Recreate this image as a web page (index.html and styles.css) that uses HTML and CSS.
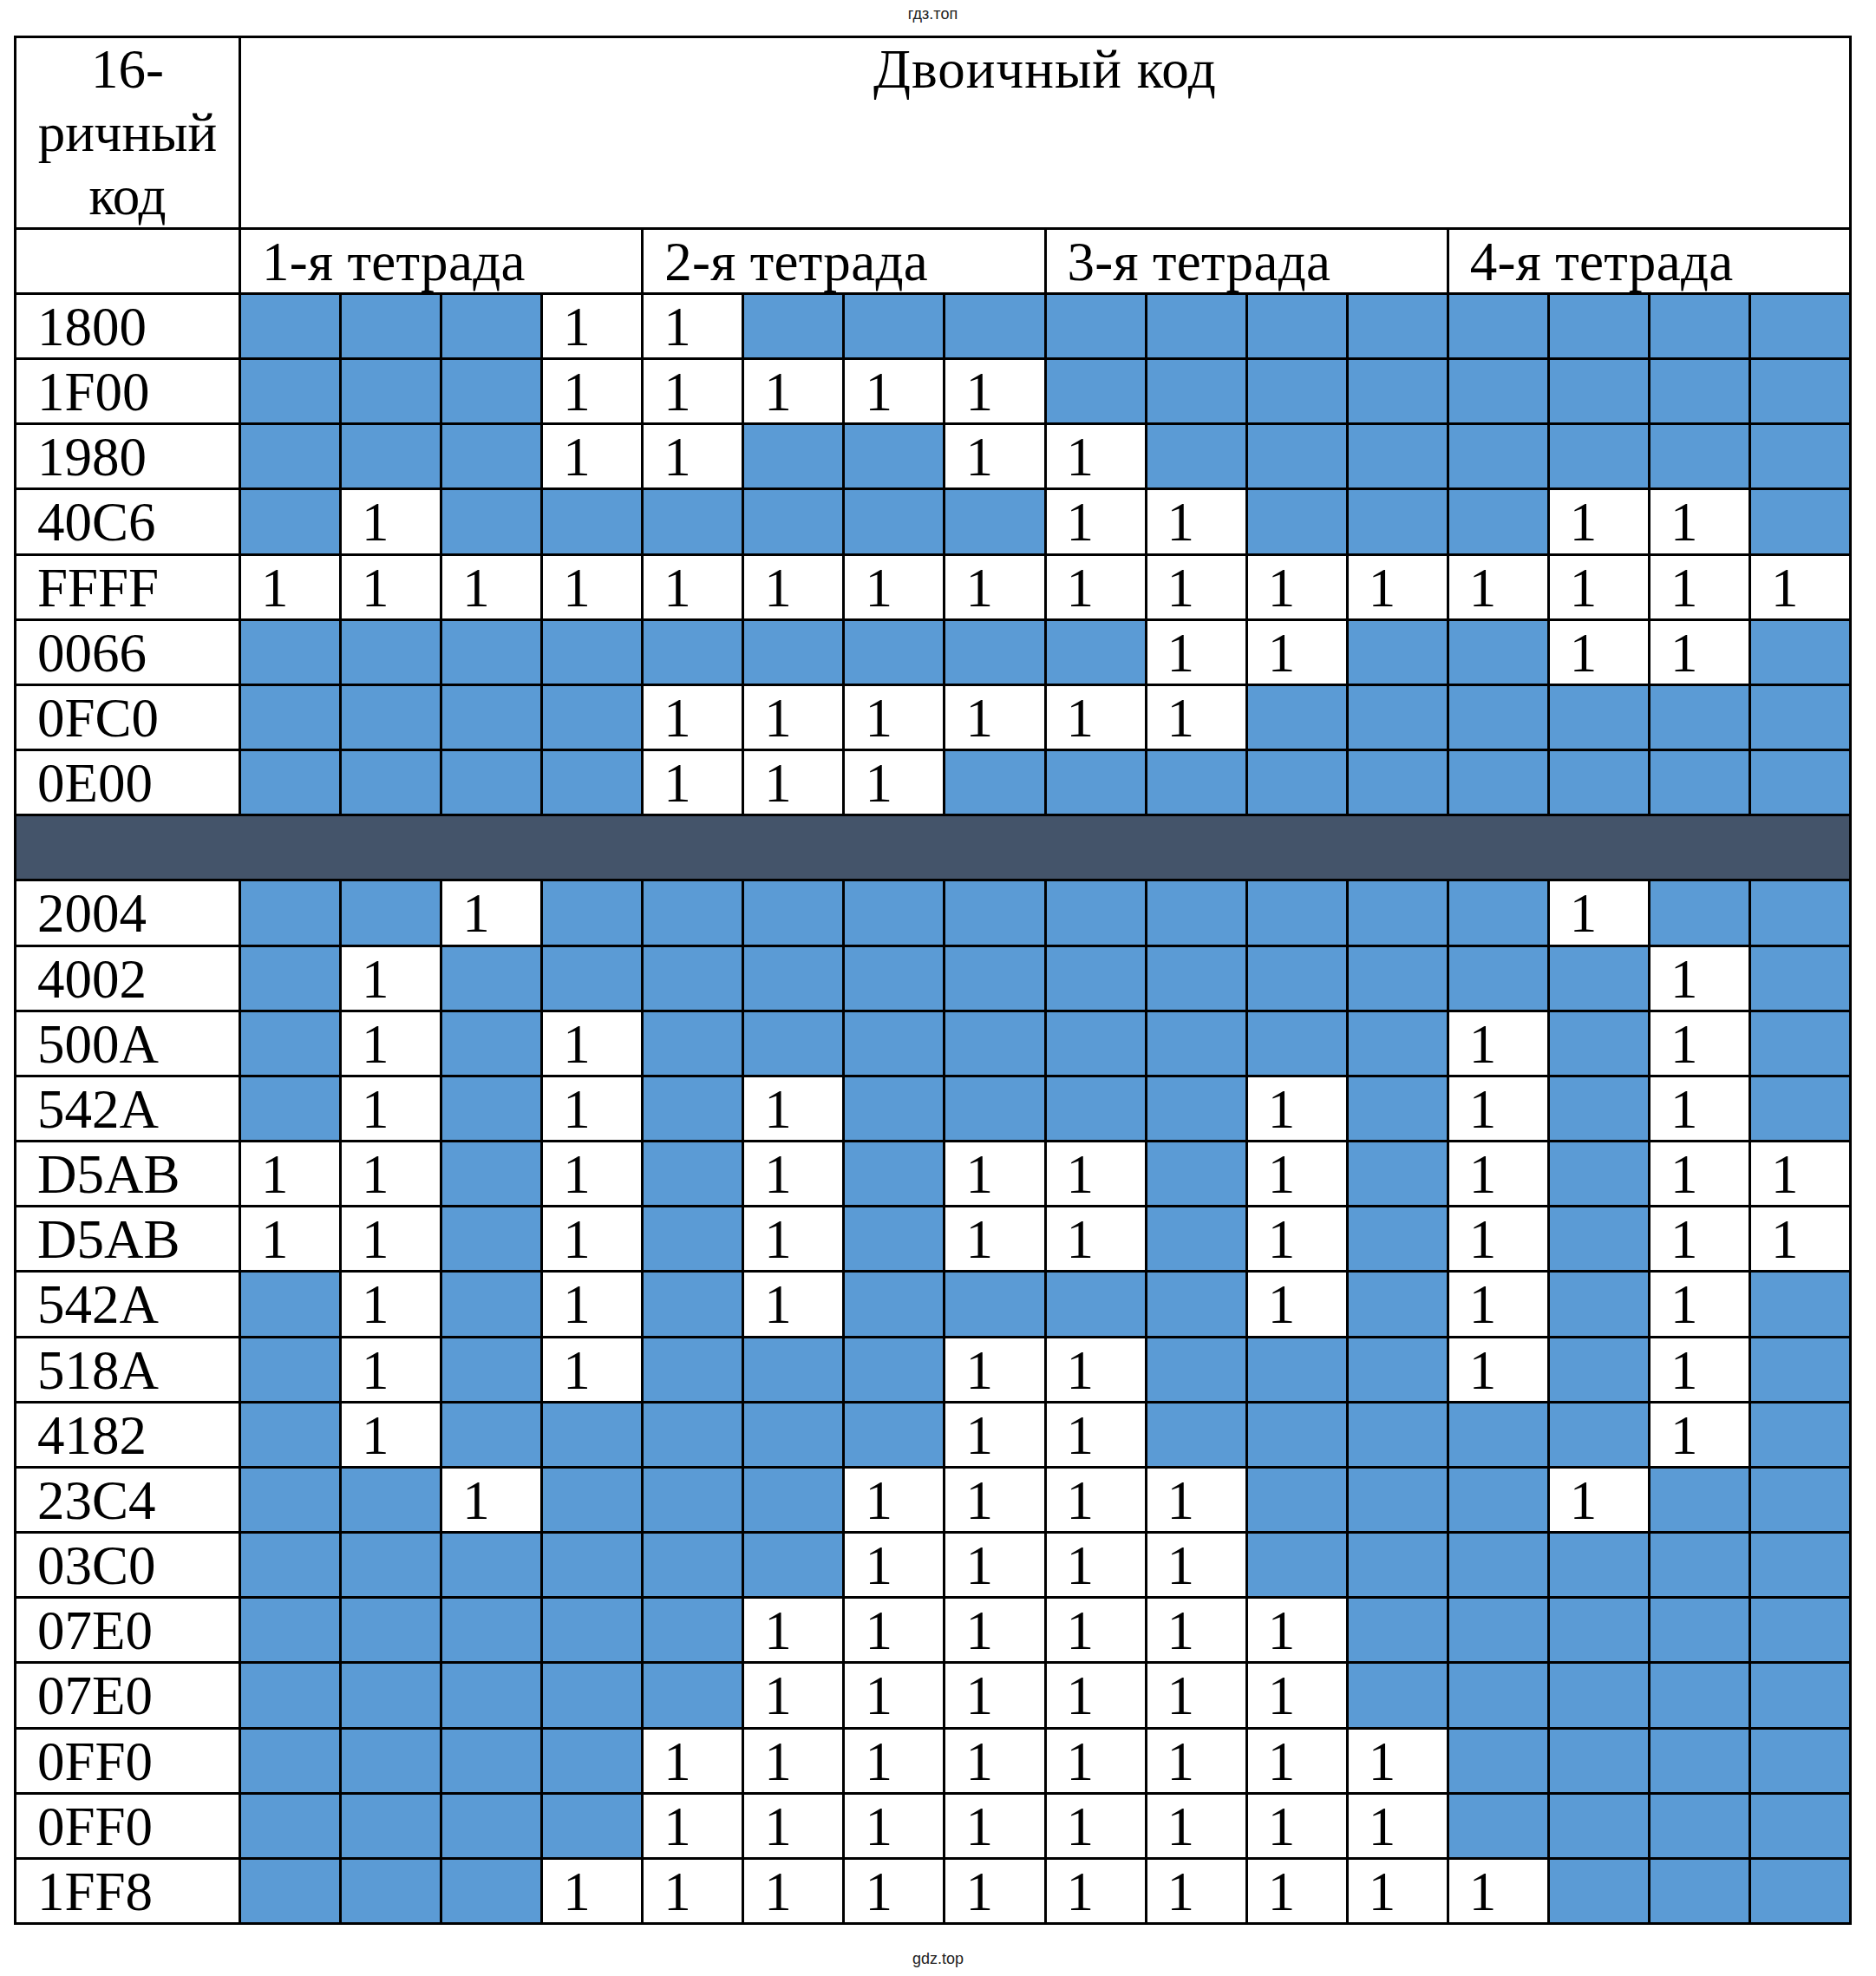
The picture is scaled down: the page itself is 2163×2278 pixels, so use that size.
FILE: index.html
```html
<!DOCTYPE html>
<html lang="ru">
<head>
<meta charset="utf-8">
<title>Двоичный код</title>
<link rel="stylesheet" href="styles.css">
</head>
<body>
<div class="page">
  <div class="wm-top"><span>гдз.топ</span></div>
  <div class="grid">
    <div class="hx">16-<br>ричный<br>код</div>
    <div class="title">Двоичный код</div>
    <div class="lbl"></div>
    <div class="tet">1-я тетрада</div>
    <div class="tet">2-я тетрада</div>
    <div class="tet">3-я тетрада</div>
    <div class="tet">4-я тетрада</div>

    <div class="lbl">1800</div><span class="z"></span><span class="z"></span><span class="z"></span><span class="o">1</span><span class="o">1</span><span class="z"></span><span class="z"></span><span class="z"></span><span class="z"></span><span class="z"></span><span class="z"></span><span class="z"></span><span class="z"></span><span class="z"></span><span class="z"></span><span class="z"></span>
    <div class="lbl">1F00</div><span class="z"></span><span class="z"></span><span class="z"></span><span class="o">1</span><span class="o">1</span><span class="o">1</span><span class="o">1</span><span class="o">1</span><span class="z"></span><span class="z"></span><span class="z"></span><span class="z"></span><span class="z"></span><span class="z"></span><span class="z"></span><span class="z"></span>
    <div class="lbl">1980</div><span class="z"></span><span class="z"></span><span class="z"></span><span class="o">1</span><span class="o">1</span><span class="z"></span><span class="z"></span><span class="o">1</span><span class="o">1</span><span class="z"></span><span class="z"></span><span class="z"></span><span class="z"></span><span class="z"></span><span class="z"></span><span class="z"></span>
    <div class="lbl">40C6</div><span class="z"></span><span class="o">1</span><span class="z"></span><span class="z"></span><span class="z"></span><span class="z"></span><span class="z"></span><span class="z"></span><span class="o">1</span><span class="o">1</span><span class="z"></span><span class="z"></span><span class="z"></span><span class="o">1</span><span class="o">1</span><span class="z"></span>
    <div class="lbl">FFFF</div><span class="o">1</span><span class="o">1</span><span class="o">1</span><span class="o">1</span><span class="o">1</span><span class="o">1</span><span class="o">1</span><span class="o">1</span><span class="o">1</span><span class="o">1</span><span class="o">1</span><span class="o">1</span><span class="o">1</span><span class="o">1</span><span class="o">1</span><span class="o">1</span>
    <div class="lbl">0066</div><span class="z"></span><span class="z"></span><span class="z"></span><span class="z"></span><span class="z"></span><span class="z"></span><span class="z"></span><span class="z"></span><span class="z"></span><span class="o">1</span><span class="o">1</span><span class="z"></span><span class="z"></span><span class="o">1</span><span class="o">1</span><span class="z"></span>
    <div class="lbl">0FC0</div><span class="z"></span><span class="z"></span><span class="z"></span><span class="z"></span><span class="o">1</span><span class="o">1</span><span class="o">1</span><span class="o">1</span><span class="o">1</span><span class="o">1</span><span class="z"></span><span class="z"></span><span class="z"></span><span class="z"></span><span class="z"></span><span class="z"></span>
    <div class="lbl">0E00</div><span class="z"></span><span class="z"></span><span class="z"></span><span class="z"></span><span class="o">1</span><span class="o">1</span><span class="o">1</span><span class="z"></span><span class="z"></span><span class="z"></span><span class="z"></span><span class="z"></span><span class="z"></span><span class="z"></span><span class="z"></span><span class="z"></span>

    <div class="sep"></div>

    <div class="lbl">2004</div><span class="z"></span><span class="z"></span><span class="o">1</span><span class="z"></span><span class="z"></span><span class="z"></span><span class="z"></span><span class="z"></span><span class="z"></span><span class="z"></span><span class="z"></span><span class="z"></span><span class="z"></span><span class="o">1</span><span class="z"></span><span class="z"></span>
    <div class="lbl">4002</div><span class="z"></span><span class="o">1</span><span class="z"></span><span class="z"></span><span class="z"></span><span class="z"></span><span class="z"></span><span class="z"></span><span class="z"></span><span class="z"></span><span class="z"></span><span class="z"></span><span class="z"></span><span class="z"></span><span class="o">1</span><span class="z"></span>
    <div class="lbl">500A</div><span class="z"></span><span class="o">1</span><span class="z"></span><span class="o">1</span><span class="z"></span><span class="z"></span><span class="z"></span><span class="z"></span><span class="z"></span><span class="z"></span><span class="z"></span><span class="z"></span><span class="o">1</span><span class="z"></span><span class="o">1</span><span class="z"></span>
    <div class="lbl">542A</div><span class="z"></span><span class="o">1</span><span class="z"></span><span class="o">1</span><span class="z"></span><span class="o">1</span><span class="z"></span><span class="z"></span><span class="z"></span><span class="z"></span><span class="o">1</span><span class="z"></span><span class="o">1</span><span class="z"></span><span class="o">1</span><span class="z"></span>
    <div class="lbl">D5AB</div><span class="o">1</span><span class="o">1</span><span class="z"></span><span class="o">1</span><span class="z"></span><span class="o">1</span><span class="z"></span><span class="o">1</span><span class="o">1</span><span class="z"></span><span class="o">1</span><span class="z"></span><span class="o">1</span><span class="z"></span><span class="o">1</span><span class="o">1</span>
    <div class="lbl">D5AB</div><span class="o">1</span><span class="o">1</span><span class="z"></span><span class="o">1</span><span class="z"></span><span class="o">1</span><span class="z"></span><span class="o">1</span><span class="o">1</span><span class="z"></span><span class="o">1</span><span class="z"></span><span class="o">1</span><span class="z"></span><span class="o">1</span><span class="o">1</span>
    <div class="lbl">542A</div><span class="z"></span><span class="o">1</span><span class="z"></span><span class="o">1</span><span class="z"></span><span class="o">1</span><span class="z"></span><span class="z"></span><span class="z"></span><span class="z"></span><span class="o">1</span><span class="z"></span><span class="o">1</span><span class="z"></span><span class="o">1</span><span class="z"></span>
    <div class="lbl">518A</div><span class="z"></span><span class="o">1</span><span class="z"></span><span class="o">1</span><span class="z"></span><span class="z"></span><span class="z"></span><span class="o">1</span><span class="o">1</span><span class="z"></span><span class="z"></span><span class="z"></span><span class="o">1</span><span class="z"></span><span class="o">1</span><span class="z"></span>
    <div class="lbl">4182</div><span class="z"></span><span class="o">1</span><span class="z"></span><span class="z"></span><span class="z"></span><span class="z"></span><span class="z"></span><span class="o">1</span><span class="o">1</span><span class="z"></span><span class="z"></span><span class="z"></span><span class="z"></span><span class="z"></span><span class="o">1</span><span class="z"></span>
    <div class="lbl">23C4</div><span class="z"></span><span class="z"></span><span class="o">1</span><span class="z"></span><span class="z"></span><span class="z"></span><span class="o">1</span><span class="o">1</span><span class="o">1</span><span class="o">1</span><span class="z"></span><span class="z"></span><span class="z"></span><span class="o">1</span><span class="z"></span><span class="z"></span>
    <div class="lbl">03C0</div><span class="z"></span><span class="z"></span><span class="z"></span><span class="z"></span><span class="z"></span><span class="z"></span><span class="o">1</span><span class="o">1</span><span class="o">1</span><span class="o">1</span><span class="z"></span><span class="z"></span><span class="z"></span><span class="z"></span><span class="z"></span><span class="z"></span>
    <div class="lbl">07E0</div><span class="z"></span><span class="z"></span><span class="z"></span><span class="z"></span><span class="z"></span><span class="o">1</span><span class="o">1</span><span class="o">1</span><span class="o">1</span><span class="o">1</span><span class="o">1</span><span class="z"></span><span class="z"></span><span class="z"></span><span class="z"></span><span class="z"></span>
    <div class="lbl">07E0</div><span class="z"></span><span class="z"></span><span class="z"></span><span class="z"></span><span class="z"></span><span class="o">1</span><span class="o">1</span><span class="o">1</span><span class="o">1</span><span class="o">1</span><span class="o">1</span><span class="z"></span><span class="z"></span><span class="z"></span><span class="z"></span><span class="z"></span>
    <div class="lbl">0FF0</div><span class="z"></span><span class="z"></span><span class="z"></span><span class="z"></span><span class="o">1</span><span class="o">1</span><span class="o">1</span><span class="o">1</span><span class="o">1</span><span class="o">1</span><span class="o">1</span><span class="o">1</span><span class="z"></span><span class="z"></span><span class="z"></span><span class="z"></span>
    <div class="lbl">0FF0</div><span class="z"></span><span class="z"></span><span class="z"></span><span class="z"></span><span class="o">1</span><span class="o">1</span><span class="o">1</span><span class="o">1</span><span class="o">1</span><span class="o">1</span><span class="o">1</span><span class="o">1</span><span class="z"></span><span class="z"></span><span class="z"></span><span class="z"></span>
    <div class="lbl">1FF8</div><span class="z"></span><span class="z"></span><span class="z"></span><span class="o">1</span><span class="o">1</span><span class="o">1</span><span class="o">1</span><span class="o">1</span><span class="o">1</span><span class="o">1</span><span class="o">1</span><span class="o">1</span><span class="o">1</span><span class="z"></span><span class="z"></span><span class="z"></span>
  </div>
  <div class="wm-bottom">gdz.top</div>
</div>
</body>
</html>
```

FILE: styles.css
```css
html, body {
  margin: 0;
  padding: 0;
  background: #ffffff;
}

.page {
  width: 2163px;
  min-height: 2278px;
}

.wm-top {
  width: 2119px;
  margin-left: 16px;
  height: 41px;
  box-sizing: border-box;
  padding-top: 6px;
  text-align: center;
  font-family: "Liberation Sans", Arial, sans-serif;
  font-size: 18px;
  line-height: 20px;
  color: #222222;
}

.grid {
  margin-left: 16px;
  width: 2119px;
  height: 2178px;
  box-sizing: border-box;
  padding: 3px;
  gap: 3px;
  background: #000000;
  display: grid;
  grid-template-columns: 256px repeat(16, 1fr);
  grid-template-rows: 218px 72px repeat(25, 1fr);
  font-family: "Liberation Serif", "Times New Roman", serif;
  font-size: 63px;
  color: #000000;
}

.grid > * {
  background: #ffffff;
  overflow: hidden;
}

.hx {
  text-align: center;
  line-height: 73px;
  padding-top: 0;
}

.title {
  grid-column: 2 / span 16;
  text-align: center;
  line-height: 73px;
  letter-spacing: 1px;
}

.tet {
  grid-column: span 4;
  line-height: 72px;
  padding-left: 24px;
  padding-top: 1px;
  letter-spacing: 0.3px;
}

.lbl {
  line-height: 72px;
  padding-left: 24px;
  padding-top: 1px;
}

.o {
  line-height: 72px;
  padding-left: 23px;
  padding-top: 1px;
}

.grid > .z {
  background: #5b9bd5;
}

.grid > .sep {
  grid-column: 1 / span 17;
  background: #44546a;
}

.wm-bottom {
  text-align: center;
  font-family: "Liberation Sans", Arial, sans-serif;
  font-size: 18px;
  line-height: 20px;
  padding-top: 29px;
  color: #222222;
}
```
